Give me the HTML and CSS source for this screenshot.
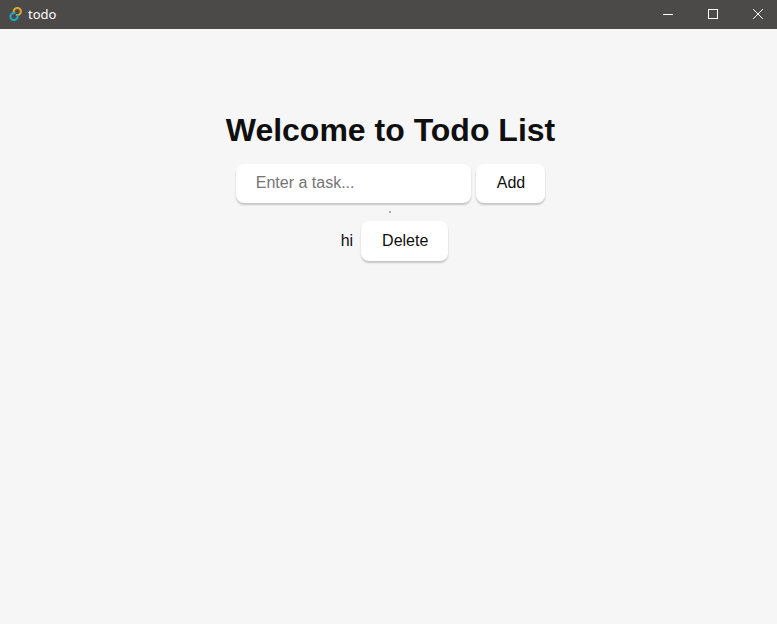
FILE: index.html
```html
<!DOCTYPE html>
<html lang="en">
<head>
    <meta charset="UTF-8">
    <title>todo</title>
    <link rel="stylesheet" href="styles.css">
</head>
<body>
    <div class="titlebar">
        <div class="app-title">
            <svg class="app-icon" width="14" height="14" viewBox="0 0 14 14" fill="none">
                <path d="M4.9 5.6A3.6 3.6 0 1 1 7.7 8.05" stroke="#e2a52c" stroke-width="2" stroke-linecap="round"/>
                <path d="M8.4 8.4A3.6 3.6 0 1 1 5.6 5.95" stroke="#1fa9c4" stroke-width="2" stroke-linecap="round"/>
            </svg>
            <span>todo</span>
        </div>
        <div class="window-btns">
            <div class="window-btn">
                <svg width="10" height="10" viewBox="0 0 10 10"><path d="M0 5.5h10" stroke="#fff" fill="none"/></svg>
            </div>
            <div class="window-btn">
                <svg width="10" height="10" viewBox="0 0 10 10"><rect x="0.5" y="0.5" width="9" height="9" stroke="#fff" fill="none"/></svg>
            </div>
            <div class="window-btn">
                <svg width="10" height="10" viewBox="0 0 10 10"><path d="M0 0l10 10M10 0L0 10" stroke="#fff" fill="none"/></svg>
            </div>
        </div>
    </div>

    <div class="container">
        <h1>Welcome to Todo List</h1>
        <div class="add-row">
            <input class="task-input" type="text" placeholder="Enter a task...">
            <button class="btn">Add</button>
        </div>
        <ul class="task-list">
            <li class="task-item">
                <span>hi</span>
                <button class="btn btn-delete">Delete</button>
            </li>
        </ul>
    </div>
</body>
</html>
```

FILE: styles.css
```css
* {
    box-sizing: border-box;
}

body {
    font-family: "Liberation Sans", Arial, sans-serif;
    background-color: #f6f6f6;
    color: #0f0f0f;
    margin: 0;
    height: 624px;
    overflow: hidden;
}

.titlebar {
    height: 29px;
    background-color: #4c4a48;
    color: #fff;
    display: flex;
    justify-content: space-between;
    align-items: center;
}

.app-title {
    display: flex;
    align-items: center;
    gap: 5px;
    height: 29px;
    padding-left: 9px;
    padding-bottom: 2px;
    font-family: "Noto Sans", sans-serif;
    font-size: 13px;
}

.window-btns {
    display: flex;
    gap: 7px;
}

.window-btn {
    width: 38px;
    height: 29px;
    padding-bottom: 2px;
    display: flex;
    align-items: center;
    justify-content: center;
}

.container {
    display: flex;
    flex-direction: column;
    align-items: center;
    padding-top: 82px;
    padding-left: 4px;
}

h1 {
    font-size: 32px;
    line-height: 38px;
    margin: 0 0 15px;
    text-align: center;
}

.add-row {
    display: flex;
    gap: 5px;
}

.task-input, .btn {
    height: 39px;
    border: 1px solid transparent;
    border-radius: 8px;
    background-color: #fff;
    font-family: inherit;
    font-size: 16px;
    color: #0f0f0f;
    box-shadow: 0 2px 2px rgba(0, 0, 0, 0.2);
    padding-bottom: 2px;
}

.task-input {
    width: 235px;
    padding-left: 19px;
    padding-right: 19px;
}

.task-input::placeholder {
    color: #757575;
}

.btn {
    padding-left: 20px;
    padding-right: 19px;
    cursor: pointer;
}

.task-list {
    margin: 0;
    padding: 0;
    list-style: none;
    display: flex;
    flex-direction: column;
    align-items: center;
}

/* the tiny dot above the row */
.task-list::before {
    content: "";
    width: 2px;
    height: 2px;
    background-color: #aaa;
    margin-top: 8px;
    margin-bottom: -10px;
}

.task-item {
    display: flex;
    align-items: center;
    gap: 8px;
    margin-top: 18px;
    margin-left: 8px;
}

.btn-delete {
    height: 40px;
}
```
